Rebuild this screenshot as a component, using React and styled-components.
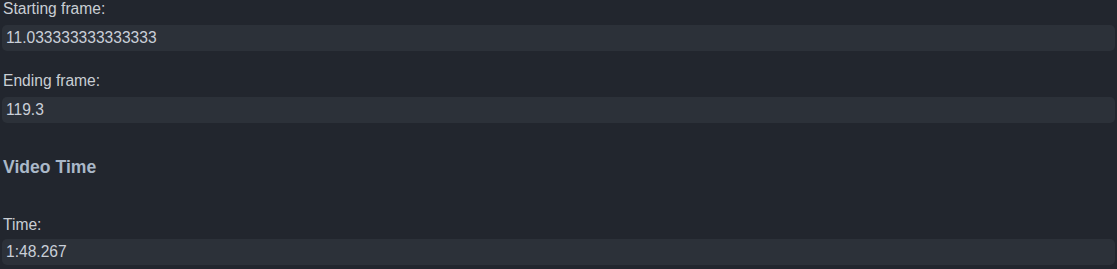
import styled, { createGlobalStyle } from "styled-components";

const Global = createGlobalStyle`
  html, body {
    margin: 0;
    padding: 0;
    background: #22262e;
  }
  body {
    font-family: "Liberation Sans", Arial, sans-serif;
    color: #c9ced4;
  }
`;

const Panel = styled.div`
  padding: 0 2px;
  min-height: 269px;
  box-sizing: border-box;
  background: #22262e;
`;

const Field = styled.div`
  display: flex;
  flex-direction: column;
  margin-bottom: ${(p) => p.$gap ?? 21}px;
`;

const Label = styled.label`
  font-size: 15.6px;
  line-height: 18px;
  padding-left: 1px;
  margin-bottom: ${(p) => p.$space ?? 7}px;
  color: #c9ced4;
`;

const Value = styled.div`
  background: #2c3139;
  border-radius: 5px;
  height: 26px;
  line-height: 26px;
  padding: 0 4px;
  font-size: 15.6px;
  color: #c9cfd8;
`;

const Heading = styled.h3`
  margin: 0 0 39px;
  padding-left: 1px;
  font-size: 17.6px;
  line-height: 20px;
  font-weight: bold;
  color: #aab8c8;
`;

export default function App() {
  return (
    <Panel>
      <Global />
      <Field>
        <Label>Starting frame:</Label>
        <Value>11.033333333333333</Value>
      </Field>
      <Field $gap={34}>
        <Label>Ending frame:</Label>
        <Value>119.3</Value>
      </Field>
      <Heading>Video Time</Heading>
      <Field $gap={0}>
        <Label $space={5}>Time:</Label>
        <Value>1:48.267</Value>
      </Field>
    </Panel>
  );
}
